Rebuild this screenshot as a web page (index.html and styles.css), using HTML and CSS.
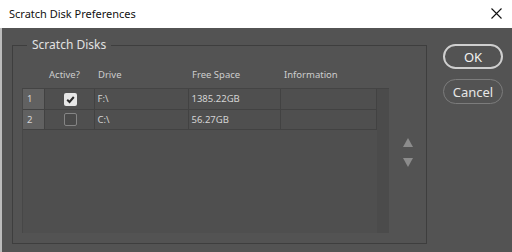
FILE: index.html
```html
<!DOCTYPE html>
<html lang="en">
<head>
  <meta charset="UTF-8" />
  <title>Scratch Disk Preferences</title>
  <link rel="stylesheet" href="styles.css">
</head>
<body>
  <div class="titlebar">
    <span class="title">Scratch Disk Preferences</span>
    <svg class="close" width="11" height="11" viewBox="0 0 11 11">
      <path d="M0.5 0.5 L10.5 10.5 M10.5 0.5 L0.5 10.5" stroke="#111" stroke-width="1.1" fill="none"/>
    </svg>
  </div>

  <div class="dialog">
    <fieldset class="group">
      <legend>Scratch Disks</legend>
      <div class="disk-area">
        <div class="disk-list">
          <div class="list-head">
            <span class="c-num"></span>
            <span class="c-active">Active?</span>
            <span class="c-drive">Drive</span>
            <span class="c-free">Free Space</span>
            <span class="c-info">Information</span>
          </div>
          <div class="list-body">
            <table class="disks">
              <tr>
                <td class="c-num">1</td>
                <td class="c-active"><span class="check on">
                  <svg width="13" height="13" viewBox="0 0 13 13"><path d="M3.2 6.8 L5.5 9 L9.8 4" stroke="#2b2b2b" stroke-width="2" fill="none"/></svg>
                </span></td>
                <td class="c-drive">F:\</td>
                <td class="c-free">1385.22GB</td>
                <td class="c-info"></td>
              </tr>
              <tr>
                <td class="c-num">2</td>
                <td class="c-active"><span class="check"></span></td>
                <td class="c-drive">C:\</td>
                <td class="c-free">56.27GB</td>
                <td class="c-info"></td>
              </tr>
            </table>
            <div class="scroll-strip"></div>
          </div>
        </div>
        <div class="move-btns">
          <svg width="10" height="9" viewBox="0 0 10 9"><path d="M5 0 L10 9 L0 9 Z" fill="#8c8c8c"/></svg>
          <svg width="10" height="9" viewBox="0 0 10 9"><path d="M0 0 L10 0 L5 9 Z" fill="#8c8c8c"/></svg>
        </div>
      </div>
    </fieldset>

    <div class="buttons">
      <button class="btn primary">OK</button>
      <button class="btn">Cancel</button>
    </div>
  </div>
</body>
</html>
```

FILE: styles.css
```css
body {
  margin: 0;
  width: 512px;
  height: 252px;
  overflow: hidden;
  font-family: "Noto Sans", "Open Sans", sans-serif;
  background: #535353;
}
.titlebar {
  height: 28px;
  background: #fff;
  display: flex;
  align-items: center;
  justify-content: space-between;
  padding: 0 10px 2px 9px;
  box-sizing: border-box;
}
.title {
  font-size: 11px;
  color: #111;
}
.close {
  display: block;
  margin-top: 1px;
}
.dialog {
  height: 224px;
  display: flex;
  border-left: 2px solid #bcbcbc;
  box-sizing: border-box;
}
.group {
  margin: 9px 0 0 10px;
  padding: 0 0 10px 9px;
  width: 414px;
  height: 207px;
  box-sizing: border-box;
  border: 1px solid #3e3e3e;
  display: flex;
  flex-direction: column;
}
.group legend {
  margin-left: 5px;
  padding: 0 5px;
  font-size: 12px;
  line-height: 16px;
  color: #e2e2e2;
}
.disk-area {
  flex: 1;
  display: flex;
  padding-top: 8px;
}
.disk-list {
  width: 367px;
  display: flex;
  flex-direction: column;
}
.list-head {
  height: 27px;
  display: flex;
  align-items: center;
  font-size: 9.5px;
  color: #cdcdcd;
}
.list-head span {
  padding-left: 5px;
  box-sizing: border-box;
}
.list-head .c-active { padding-left: 6px; }
.c-num { width: 21px; }
.c-active { width: 50px; }
.c-drive { width: 94px; }
.c-free { width: 92px; }
.c-info { width: 96px; }
.list-body {
  flex: 1;
  display: flex;
  background: #4f4f4f;
  border-top: 1px solid #444;
  border-left: 1px solid #474747;
}
.disks {
  border-collapse: collapse;
  table-layout: fixed;
  width: 352px;
  align-self: flex-start;
}
.disks td {
  height: 20px;
  padding: 0 0 0 3px;
  font-size: 9.5px;
  color: #d4d4d4;
  border-right: 1px solid #424242;
  border-bottom: 1px solid #424242;
  box-sizing: border-box;
}
.disks td.c-num {
  background: #616161;
  padding-left: 4px;
}
.disks td.c-active {
  text-align: center;
}
.check {
  display: inline-block;
  width: 13px;
  height: 13px;
  vertical-align: middle;
  border: 1px solid #858585;
  border-radius: 2px;
  background: #4a4a4a;
  box-sizing: border-box;
}
.check.on {
  border: none;
  background: #e6e6e6;
}
.check svg {
  display: block;
}
.scroll-strip {
  width: 14px;
  margin-left: auto;
  background: #4b4b4b;
}
.move-btns {
  width: 36px;
  display: flex;
  flex-direction: column;
  align-items: center;
  gap: 11px;
  padding-top: 77px;
  margin-left: 1px;
}
.move-btns svg {
  display: block;
}
.buttons {
  margin-left: 16px;
  padding-top: 16px;
  display: flex;
  flex-direction: column;
  gap: 10px;
}
.btn {
  width: 60px;
  height: 25px;
  border-radius: 13px;
  border: 1px solid #7c7c7c;
  background: #535353;
  color: #e6e6e6;
  font-family: "Noto Sans", "Open Sans", sans-serif;
  font-size: 13px;
  padding: 0;
}
.btn.primary {
  border: 2px solid #cfcfcf;
  color: #f2f2f2;
}
```
